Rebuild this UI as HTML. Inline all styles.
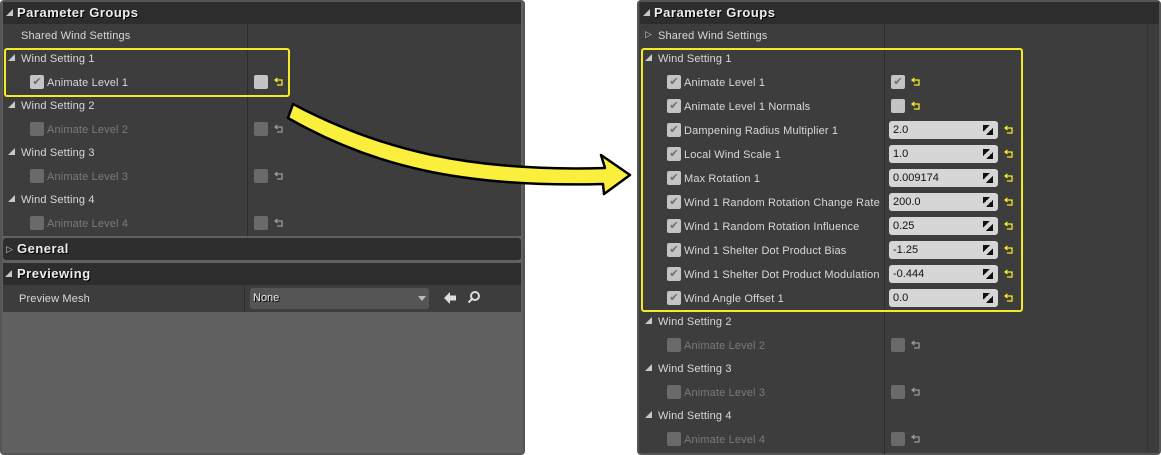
<!DOCTYPE html>
<html><head><meta charset="utf-8"><style>
*{margin:0;padding:0;box-sizing:border-box}
body{width:1161px;height:455px;background:#fff;position:relative;overflow:hidden;font-family:"Liberation Sans",sans-serif;font-size:11px;color:#d8d8d8}
.p{position:absolute;background:#606060;border:2px solid #555;border-radius:4px}
.a{position:absolute}
.hd{position:absolute;background:#2d2d2d;color:#eee;font-weight:bold;font-size:13px;letter-spacing:0.5px;line-height:22px;text-shadow:1px 1px 0 #000}
.row{position:absolute;background:#3d3d3d}
.t{position:absolute;line-height:16px;white-space:nowrap;margin-top:1px;letter-spacing:0.15px}
.dim{color:#7a7a7a}
.cb{position:absolute;width:14px;height:14px;background:#c4c4c4;border-radius:2px;color:#6a6a6a;font-size:11px;line-height:14px;text-align:center}
.cb.off{background:#6a6a6a}
.tri{position:absolute;width:0;height:0;border-left:7px solid transparent;border-bottom:7px solid #c8c8c8}
.v{position:absolute;width:109px;height:18px;background:#d6d6d6;border-radius:3px;color:#111;line-height:18px;padding-left:4px;font-size:11px}
.v:after{content:"";position:absolute;right:5px;top:4px;width:10px;height:10px;background:linear-gradient(135deg,#111 0 35%,transparent 35% 65%,#111 65%)}
.ysel{position:absolute;border:2px solid #f5ea2a;border-radius:3px}
</style></head><body>
<svg width="0" height="0" style="position:absolute"><defs><symbol id="r" viewBox="0 0 10 10"><path d="M3.5 1 L1 3 L3.5 5 M1 3 H8 V8 H3" fill="none" stroke="currentColor" stroke-width="1.3"/></symbol></defs></svg>

<!-- LEFT PANEL -->
<div class="p" style="left:0;top:0;width:525px;height:455px"></div>
<div class="row" style="left:3px;top:2px;width:518px;height:234px"></div>
<div class="hd" style="left:3px;top:2px;width:518px;height:22px;padding-left:14px">Parameter Groups</div>
<div class="tri" style="left:6px;top:9px"></div>
<div class="a" style="left:247px;top:24px;width:1px;height:212px;background:#2c2c2c"></div>
<div class="t" style="left:21px;top:27px">Shared Wind Settings</div>
<div class="tri" style="left:8px;top:54px"></div><div class="t" style="left:21px;top:50px">Wind Setting 1</div>
<div class="cb" style="left:30px;top:75px">✔</div><div class="t" style="left:47px;top:74px">Animate Level 1</div>
<div class="cb" style="left:254px;top:75px"></div><svg class="a" style="left:274px;top:77px;color:#f5ea2a" width="10" height="10"><use href="#r"/></svg>
<div class="tri" style="left:8px;top:101px"></div><div class="t" style="left:21px;top:97px">Wind Setting 2</div>
<div class="cb off" style="left:30px;top:122px"></div><div class="t dim" style="left:47px;top:121px">Animate Level 2</div>
<div class="cb off" style="left:254px;top:122px"></div><svg class="a" style="left:274px;top:124px;color:#999" width="10" height="10"><use href="#r"/></svg>
<div class="tri" style="left:8px;top:148px"></div><div class="t" style="left:21px;top:144px">Wind Setting 3</div>
<div class="cb off" style="left:30px;top:169px"></div><div class="t dim" style="left:47px;top:168px">Animate Level 3</div>
<div class="cb off" style="left:254px;top:169px"></div><svg class="a" style="left:274px;top:171px;color:#999" width="10" height="10"><use href="#r"/></svg>
<div class="tri" style="left:8px;top:195px"></div><div class="t" style="left:21px;top:191px">Wind Setting 4</div>
<div class="cb off" style="left:30px;top:216px"></div><div class="t dim" style="left:47px;top:215px">Animate Level 4</div>
<div class="cb off" style="left:254px;top:216px"></div><svg class="a" style="left:274px;top:218px;color:#999" width="10" height="10"><use href="#r"/></svg>
<div class="ysel" style="left:4px;top:48px;width:286px;height:49px"></div>

<div class="hd" style="left:3px;top:238px;width:518px;height:22px;padding-left:14px;border-radius:3px">General</div>
<div class="a" style="left:6px;top:244px;color:#ccc;font-size:9px">▷</div>
<div class="hd" style="left:3px;top:263px;width:518px;height:22px;padding-left:14px">Previewing</div>
<div class="tri" style="left:5px;top:270px"></div>
<div class="row" style="left:3px;top:285px;width:518px;height:27px"></div>
<div class="a" style="left:244px;top:285px;width:1px;height:27px;background:#2c2c2c"></div>
<div class="t" style="left:19px;top:290px">Preview Mesh</div>
<div class="a" style="left:250px;top:288px;width:179px;height:21px;background:#555;border-radius:3px;color:#eee;line-height:21px;padding-left:3px;text-shadow:1px 1px 0 #000">None</div>
<div class="a" style="left:418px;top:296px;border-left:4px solid transparent;border-right:4px solid transparent;border-top:5px solid #bbb"></div>
<svg class="a" style="left:443px;top:291px" width="14" height="14"><path d="M1 7 L7 1 V4.5 H13 V9.5 H7 V13 Z" fill="#ddd"/></svg>
<svg class="a" style="left:467px;top:290px" width="14" height="14"><circle cx="8" cy="6" r="4" fill="none" stroke="#ddd" stroke-width="2"/><path d="M5 9 L1.5 12.5" stroke="#ddd" stroke-width="2"/></svg>

<!-- ARROW -->
<svg class="a" style="left:0;top:0" width="1161" height="455">
<path d="M293 104 C380 150 470 172 605 168 L601 155 L630 175 L604 194 L603 184 C460 188 370 165 288 118 Z" fill="#fbef3d" stroke="#000" stroke-width="2.5" stroke-linejoin="round"/>
</svg>

<!-- RIGHT PANEL -->
<div class="p" style="left:637px;top:0;width:524px;height:455px;background:#3d3d3d"></div>
<div class="a" style="left:1147px;top:2px;width:1px;height:450px;background:#333"></div>
<div class="hd" style="left:640px;top:2px;width:519px;height:22px;padding-left:14px">Parameter Groups</div>
<div class="tri" style="left:643px;top:9px"></div>
<div class="a" style="left:884px;top:24px;width:1px;height:430px;background:#2c2c2c"></div>
<div class="a" style="left:645px;top:29px;color:#ccc;font-size:9px">▷</div>
<div class="t" style="left:658px;top:27px">Shared Wind Settings</div>
<div class="tri" style="left:645px;top:54px"></div><div class="t" style="left:658px;top:50px">Wind Setting 1</div>

<div class="cb" style="left:667px;top:75px">✔</div><div class="t" style="left:684px;top:74px">Animate Level 1</div>
<div class="cb" style="left:891px;top:75px">✔</div><svg class="a" style="left:911px;top:77px;color:#f5ea2a" width="10" height="10"><use href="#r"/></svg>
<div class="cb" style="left:667px;top:99px">✔</div><div class="t" style="left:684px;top:98px">Animate Level 1 Normals</div>
<div class="cb" style="left:891px;top:99px"></div><svg class="a" style="left:911px;top:101px;color:#f5ea2a" width="10" height="10"><use href="#r"/></svg>

<div class="cb" style="left:667px;top:123px">✔</div><div class="t" style="left:684px;top:122px">Dampening Radius Multiplier 1</div><div class="v" style="left:889px;top:121px">2.0</div><svg class="a" style="left:1004px;top:125px;color:#f5ea2a" width="10" height="10"><use href="#r"/></svg>
<div class="cb" style="left:667px;top:147px">✔</div><div class="t" style="left:684px;top:146px">Local Wind Scale 1</div><div class="v" style="left:889px;top:145px">1.0</div><svg class="a" style="left:1004px;top:149px;color:#f5ea2a" width="10" height="10"><use href="#r"/></svg>
<div class="cb" style="left:667px;top:171px">✔</div><div class="t" style="left:684px;top:170px">Max Rotation 1</div><div class="v" style="left:889px;top:169px">0.009174</div><svg class="a" style="left:1004px;top:173px;color:#f5ea2a" width="10" height="10"><use href="#r"/></svg>
<div class="cb" style="left:667px;top:195px">✔</div><div class="t" style="left:684px;top:194px">Wind 1 Random Rotation Change Rate</div><div class="v" style="left:889px;top:193px">200.0</div><svg class="a" style="left:1004px;top:197px;color:#f5ea2a" width="10" height="10"><use href="#r"/></svg>
<div class="cb" style="left:667px;top:219px">✔</div><div class="t" style="left:684px;top:218px">Wind 1 Random Rotation Influence</div><div class="v" style="left:889px;top:217px">0.25</div><svg class="a" style="left:1004px;top:221px;color:#f5ea2a" width="10" height="10"><use href="#r"/></svg>
<div class="cb" style="left:667px;top:243px">✔</div><div class="t" style="left:684px;top:242px">Wind 1 Shelter Dot Product Bias</div><div class="v" style="left:889px;top:241px">-1.25</div><svg class="a" style="left:1004px;top:245px;color:#f5ea2a" width="10" height="10"><use href="#r"/></svg>
<div class="cb" style="left:667px;top:267px">✔</div><div class="t" style="left:684px;top:266px">Wind 1 Shelter Dot Product Modulation</div><div class="v" style="left:889px;top:265px">-0.444</div><svg class="a" style="left:1004px;top:269px;color:#f5ea2a" width="10" height="10"><use href="#r"/></svg>
<div class="cb" style="left:667px;top:291px">✔</div><div class="t" style="left:684px;top:290px">Wind Angle Offset 1</div><div class="v" style="left:889px;top:289px">0.0</div><svg class="a" style="left:1004px;top:293px;color:#f5ea2a" width="10" height="10"><use href="#r"/></svg>
<div class="ysel" style="left:641px;top:48px;width:382px;height:264px"></div>

<div class="tri" style="left:645px;top:317px"></div><div class="t" style="left:658px;top:313px">Wind Setting 2</div>
<div class="cb off" style="left:667px;top:338px"></div><div class="t dim" style="left:684px;top:337px">Animate Level 2</div>
<div class="cb off" style="left:891px;top:338px"></div><svg class="a" style="left:911px;top:340px;color:#999" width="10" height="10"><use href="#r"/></svg>
<div class="tri" style="left:645px;top:364px"></div><div class="t" style="left:658px;top:360px">Wind Setting 3</div>
<div class="cb off" style="left:667px;top:385px"></div><div class="t dim" style="left:684px;top:384px">Animate Level 3</div>
<div class="cb off" style="left:891px;top:385px"></div><svg class="a" style="left:911px;top:387px;color:#999" width="10" height="10"><use href="#r"/></svg>
<div class="tri" style="left:645px;top:411px"></div><div class="t" style="left:658px;top:407px">Wind Setting 4</div>
<div class="cb off" style="left:667px;top:432px"></div><div class="t dim" style="left:684px;top:431px">Animate Level 4</div>
<div class="cb off" style="left:891px;top:432px"></div><svg class="a" style="left:911px;top:434px;color:#999" width="10" height="10"><use href="#r"/></svg>
</body></html>
